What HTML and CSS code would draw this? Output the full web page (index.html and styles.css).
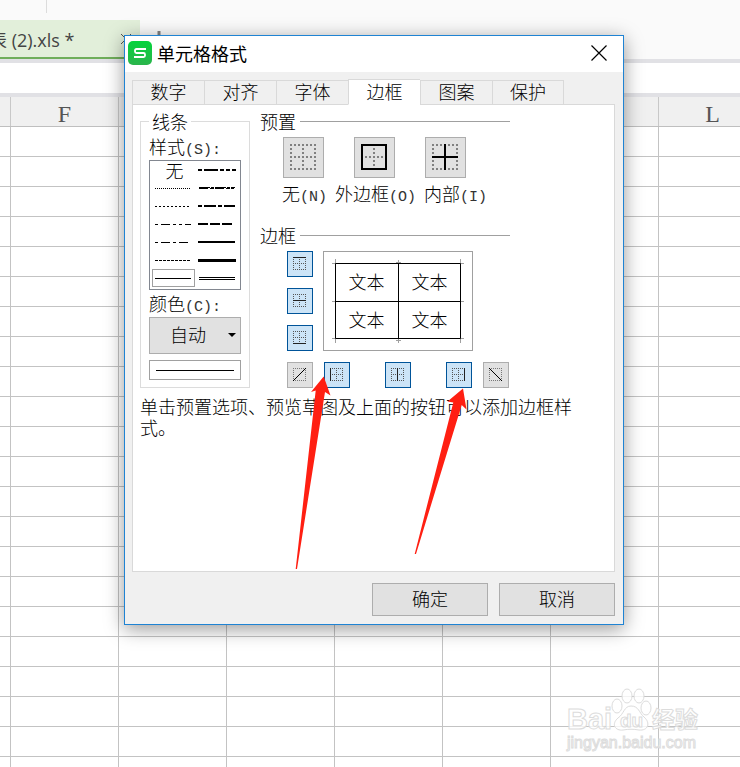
FILE: index.html
```html
<!DOCTYPE html>
<html lang="zh-CN">
<head>
    <meta charset="UTF-8">
    <meta name="viewport" content="width=device-width, initial-scale=1.0">
    <title>单元格格式</title>
    <link rel="stylesheet" href="styles.css">
</head>
<body>
    <!-- Shared icon shapes -->
    <svg class="defs" width="0" height="0">
        <symbol id="grid-lg" viewBox="0 0 27 27">
            <path d="M0 1H26M0 13H26M0 25H26M1 0V26M13 0V26M25 0V26" stroke="#808080" stroke-width="2" stroke-dasharray="2 2"/>
        </symbol>
        <symbol id="grid-sm" viewBox="0 0 14 14">
            <path d="M0 .5H13M0 6.5H13M0 12.5H13M.5 0V13M6.5 0V13M12.5 0V13" stroke="#555" stroke-dasharray="1 1"/>
        </symbol>
        <symbol id="box-sm" viewBox="0 0 14 14">
            <path d="M0 .5H13M0 12.5H13M.5 0V13M12.5 0V13" stroke="#777" stroke-dasharray="1 1"/>
        </symbol>
    </svg>

    <div class="workspace">
        <!-- Spreadsheet behind the dialog -->
        <div class="doc-tabs">
            <span class="doc-divider"></span>
            <div class="doc-tab">
                <span class="doc-name">表 (2).xls *</span>
                <svg class="doc-close" width="12" height="12"><path d="M1 1L11 11M11 1L1 11" stroke="#555"/></svg>
            </div>
            <svg class="doc-add" width="20" height="20"><path d="M10 0V20M0 10H20" stroke="#808080" stroke-width="3"/></svg>
        </div>
        <div class="formula-bar"></div>
        <div class="columns">
            <span></span><span>F</span><span>G</span><span>H</span><span>I</span><span>J</span><span>K</span><span>L</span>
        </div>
        <div class="cells"></div>

        <!-- Format cells dialog -->
        <div class="dialog" role="dialog" aria-labelledby="dialog-title">
            <div class="title-bar">
                <svg class="app-icon" width="24" height="24" viewBox="0 0 24 24" fill="none">
                    <defs>
                        <linearGradient id="green" x1="0" y1="0" x2="0" y2="1">
                            <stop offset="0" stop-color="#04d43c"/>
                            <stop offset="1" stop-color="#2bb44c"/>
                        </linearGradient>
                    </defs>
                    <rect width="24" height="24" rx="5" fill="url(#green)"/>
                    <path d="M18 8H8.500Q7 8 7 9.500V10.500Q7 12 8.500 12H15.500Q17 12 17 13.500V14.500Q17 16 15.500 16H6" stroke="#fff" stroke-width="1.800"/>
                </svg>
                <h1 id="dialog-title">单元格格式</h1>
                <button class="close" aria-label="关闭">
                    <svg width="16" height="16"><path d="M.5 .5L15.500 15.500M15.500 .5L.5 15.500" stroke="#000" stroke-width="1.200"/></svg>
                </button>
            </div>

            <div class="dialog-body">
                <div class="tabs" role="tablist">
                    <button class="tab" role="tab">数字</button>
                    <button class="tab" role="tab">对齐</button>
                    <button class="tab" role="tab">字体</button>
                    <button class="tab active" role="tab" aria-selected="true">边框</button>
                    <button class="tab" role="tab">图案</button>
                    <button class="tab" role="tab">保护</button>
                </div>

                <div class="panel">
                    <div class="panel-columns">
                        <fieldset class="lines">
                            <legend>线条</legend>
                            <span class="field-label" id="style-label">样式<span class="key">(S):</span></span>
                            <div class="style-list" role="group" aria-labelledby="style-label">
                                <button class="none">无</button>
                                <button aria-label="双点划线"><svg width="38" height="6"><path d="M0 3H38" stroke-width="2" stroke-dasharray="4 2 14 2 4 2"/></svg></button>
                                <button aria-label="细点线"><svg width="38" height="6"><path d="M0 3.500H36" stroke-dasharray="1 1"/></svg></button>
                                <button aria-label="斜点划线"><svg width="38" height="6"><path d="M1 2.500H37" stroke-dasharray="11 1 3 1"/><path d="M1 3.500H36" stroke-dasharray="9 2 4 1"/></svg></button>
                                <button aria-label="点线"><svg width="38" height="6"><path d="M0 3.500H35" stroke-dasharray="2 2"/></svg></button>
                                <button aria-label="粗点划线"><svg width="38" height="6"><path d="M0 3H37" stroke-width="2" stroke-dasharray="4 2 12 2"/></svg></button>
                                <button aria-label="细双点划线"><svg width="38" height="6"><path d="M0 3.500H36" stroke-dasharray="3 3 9 3 3 3"/></svg></button>
                                <button aria-label="粗虚线"><svg width="38" height="6"><path d="M0 3H34" stroke-width="2" stroke-dasharray="10 2"/></svg></button>
                                <button aria-label="细点划线"><svg width="38" height="6"><path d="M0 3.500H33" stroke-dasharray="3 3 9 3"/></svg></button>
                                <button aria-label="中线"><svg width="38" height="6"><path d="M0 3H37" stroke-width="2"/></svg></button>
                                <button aria-label="虚线"><svg width="38" height="6"><path d="M0 3.500H35" stroke-dasharray="3 1"/></svg></button>
                                <button aria-label="粗线"><svg width="38" height="6"><path d="M0 3.500H38" stroke-width="3"/></svg></button>
                                <button class="selected" aria-label="细线"><svg width="38" height="6"><path d="M0 3.500H36"/></svg></button>
                                <button aria-label="双线"><svg width="38" height="6"><path d="M1 2.500H37M1 4.500H37"/></svg></button>
                            </div>
                            <label class="field-label" for="color">颜色<span class="key">(C):</span></label>
                            <div class="select-wrap">
                                <select id="color"><option>自动</option></select>
                            </div>
                            <div class="line-preview"></div>
                        </fieldset>

                        <div class="settings">
                            <h2>预置</h2>
                            <div class="presets">
                                <button id="preset-none"><svg width="27" height="27"><use href="#grid-lg"/></svg></button>
                                <button id="preset-outer"><svg width="27" height="27"><path d="M13 4V22M4 13H22" stroke="#808080" stroke-width="2" stroke-dasharray="2 2"/><rect x="1" y="1" width="24" height="24" fill="none" stroke="#000" stroke-width="2"/></svg></button>
                                <button id="preset-inner"><svg width="27" height="27"><path d="M0 1H26M0 25H26M1 0V26M25 0V26" stroke="#808080" stroke-width="2" stroke-dasharray="2 2"/><path d="M0 13H26M13 0V26" stroke="#000" stroke-width="2"/></svg></button>
                            </div>
                            <div class="preset-labels">
                                <label for="preset-none">无<span class="key">(N)</span></label>
                                <label for="preset-outer">外边框<span class="key">(O)</span></label>
                                <label for="preset-inner">内部<span class="key">(I)</span></label>
                            </div>

                            <h2 class="border-heading">边框</h2>
                            <div class="border-tools">
                                <div class="side">
                                    <button class="edge on" aria-label="上边框"><svg width="14" height="14"><use href="#grid-sm"/><path d="M0 .5H13" stroke="#222"/></svg></button>
                                    <button class="edge on" aria-label="水平内框线"><svg width="14" height="14"><use href="#grid-sm"/><path d="M0 6.500H13" stroke="#222"/></svg></button>
                                    <button class="edge on" aria-label="下边框"><svg width="14" height="14"><use href="#grid-sm"/><path d="M0 12.500H13" stroke="#222"/></svg></button>
                                </div>
                                <div class="preview">
                                    <svg class="preview-lines" width="132" height="84" fill="none">
                                        <path d="M0 4.500H5M3.500 0V5M127 4.500H132M128.500 0V5M0 79.500H5M3.500 79V84M127 79.500H132M128.500 79V84M0 42.500H4M128 42.500H132M64 3.500H69M64 81.500H69M66.500 1V4M66.500 80V84" stroke="#a0a0a0"/>
                                        <path d="M3.500 4.500H128.500V79.500H3.500ZM66.500 4V80M4 42.500H129" stroke="#000"/>
                                    </svg>
                                    <span>文本</span><span>文本</span><span>文本</span><span>文本</span>
                                </div>
                                <div class="bottom">
                                    <button class="edge" aria-label="左斜线"><svg width="14" height="14"><use href="#box-sm"/><path d="M0 13L13 0" stroke="#000"/></svg></button>
                                    <div class="verticals">
                                        <button class="edge on" aria-label="左边框"><svg width="14" height="14"><use href="#grid-sm"/><path d="M.5 0V13" stroke="#222"/></svg></button>
                                        <button class="edge on" aria-label="垂直内框线"><svg width="14" height="14"><use href="#grid-sm"/><path d="M6.500 0V13" stroke="#222"/></svg></button>
                                        <button class="edge on" aria-label="右边框"><svg width="14" height="14"><use href="#grid-sm"/><path d="M12.500 0V13" stroke="#222"/></svg></button>
                                    </div>
                                    <button class="edge" aria-label="右斜线"><svg width="14" height="14"><use href="#box-sm"/><path d="M0 0L13 13" stroke="#000"/></svg></button>
                                </div>
                            </div>
                        </div>
                    </div>
                    <p class="hint">单击预置选项、预览草图及上面的按钮可以添加边框样式。</p>
                </div>

                <div class="actions">
                    <button>确定</button>
                    <button>取消</button>
                </div>
            </div>
        </div>

        <!-- Red pointers over the left and right border buttons -->
        <svg class="arrows" width="740" height="767" fill="#ff1f12">
            <path d="M323.700 376.500L330.500 395.500L325 392L297 569H295.700L315.700 390.500L311 392Z"/>
            <path d="M463 388.500L466.500 409.500L461.700 405L416 554H414.700L453.300 402.500L447.500 401.500Z"/>
        </svg>

        <svg class="watermark" width="140" height="72">
            <g fill="#fff" fill-opacity=".8" stroke="#dcdcdc">
                <text x="5" y="48" font-size="29" font-weight="bold">Bai</text>
                <ellipse cx="55" cy="25" rx="5" ry="7"/>
                <ellipse cx="65" cy="15" rx="5" ry="7"/>
                <ellipse cx="77" cy="15" rx="5" ry="7"/>
                <ellipse cx="84" cy="27" rx="5" ry="7"/>
                <path d="M69 25C62 25 62 33 56 37C49 43 53 50 61 49C67 48 71 48 77 49C86 50 89 42 82 36C77 32 77 25 69 25Z"/>
                <text x="58" y="46" font-size="19" font-weight="bold">du</text>
                <text class="cjk" x="90" y="47" font-size="23" font-weight="bold">经验</text>
                <text x="5" y="67" font-size="16">jingyan.baidu.com</text>
            </g>
        </svg>
    </div>
</body>
</html>
```
FILE: styles.css
```css
* {
    box-sizing: border-box;
    margin: 0;
    padding: 0;
}

body {
    font-family: "Noto Sans CJK SC", sans-serif;
    font-size: 18px;
    font-weight: 300;
    color: #000;
}

button,
select {
    font: inherit;
    color: inherit;
    border: 1px solid #adadad;
    border-radius: 0;
    background: #e1e1e1;
}

svg {
    display: block;
}

.defs {
    position: absolute;
}

.workspace {
    position: relative;
    display: flex;
    flex-direction: column;
    min-height: 100vh;
    overflow: hidden;
    background: #fff;
}

/* Spreadsheet */
.doc-tabs {
    position: relative;
    display: flex;
    align-items: flex-end;
    height: 59px;
    background: #fafafa;
}

.doc-divider {
    position: absolute;
    left: 46px;
    top: 0;
    width: 1px;
    height: 13px;
    background: #dcdcdc;
}

.doc-tab {
    display: flex;
    align-items: center;
    justify-content: space-between;
    width: 140px;
    height: 39px;
    padding-right: 8px;
    background: #e2efda;
    border-bottom: 2px solid #6fae5a;
}

.doc-name {
    margin-left: -11px;
    font-family: "Open Sans", "Noto Sans CJK SC", sans-serif;
    font-weight: 400;
    color: #444;
    white-space: nowrap;
}

.doc-add {
    margin: 0 0 8px 9px;
}

.formula-bar {
    height: 38px;
    background: #fff;
    border-top: 4px solid #e1e1e5;
    border-bottom: 4px solid #e1e1e5;
}

.columns {
    display: flex;
    height: 30px;
    background: #f0f0f0;
    border-bottom: 1px solid #bfbfbf;
}

.columns span {
    flex: 0 0 108px;
    border-right: 1px solid #c8c8c8;
    font: 24px/34px "Liberation Serif", serif;
    text-align: center;
    color: #555;
}

.columns span:first-child {
    flex-basis: 11px;
}

.cells {
    flex: 1;
    background-image:
        linear-gradient(to right, #c3c3c3 1px, transparent 1px),
        linear-gradient(to top, #c3c3c3 1px, transparent 1px);
    background-size: 108px 30px;
    background-position: 10px 0;
}

/* Dialog */
.dialog {
    position: absolute;
    left: 124px;
    top: 35px;
    width: 500px;
    background: #f0f0f0;
    border: 1px solid #1f83d3;
    box-shadow: 0 4px 18px rgba(0, 0, 0, 0.4);
}

.title-bar {
    display: flex;
    align-items: center;
    height: 36px;
    padding: 0 16px 2px 3px;
    background: #fff;
}

.title-bar h1 {
    flex: 1;
    margin-left: 5px;
    font-size: 18px;
    font-weight: 400;
}

.close {
    border: none;
    background: none;
}

.dialog-body {
    padding: 7px 8px 8px 7px;
}

.tabs {
    display: flex;
    align-items: flex-end;
    height: 26px;
}

.tab {
    width: 72px;
    height: 25px;
    line-height: 21px;
    padding-bottom: 2px;
    background: #f0f0f0;
    border-color: #d9d9d9;
    border-right-width: 0;
}

.tab:last-child {
    border-right-width: 1px;
}

.tab.active {
    height: 26px;
    background: #fff;
    border-bottom-color: #fff;
    z-index: 1;
}

.panel {
    min-height: 468px;
    margin-top: -1px;
    padding: 4px 7px;
    background: #fff;
    border: 1px solid #d9d9d9;
}

.panel-columns {
    display: flex;
    align-items: flex-start;
    gap: 10px;
}

.key {
    font-family: "Liberation Mono", monospace;
    font-size: 15px;
    line-height: 1;
    color: #333;
}

/* Line style */
.lines {
    width: 110px;
    padding: 0 8px 7px;
    border: 1px solid #dcdcdc;
}

.lines legend {
    padding: 0 3px;
    line-height: 24px;
}

.field-label {
    display: block;
    height: 27px;
    line-height: 27px;
}

.style-list {
    display: grid;
    grid-template-columns: 1fr 1fr;
    grid-auto-rows: 18px;
    height: 130px;
    padding: 0 2px;
    border: 1px solid #828790;
}

.style-list button {
    display: flex;
    align-items: center;
    padding-left: 2px;
    border-color: transparent;
    background: none;
}

.style-list .none {
    justify-content: center;
    line-height: 16px;
}

.style-list .selected {
    border-color: #a0a0a0;
}

.style-list path {
    stroke: #000;
}

.select-wrap {
    position: relative;
}

.select-wrap::after {
    content: "";
    position: absolute;
    right: 5px;
    top: 16px;
    border: 4px solid transparent;
    border-top-color: #000;
    border-bottom-width: 0;
}

select {
    display: block;
    width: 100%;
    height: 37px;
    padding: 0 0 3px 20px;
    appearance: none;
}

.line-preview {
    display: flex;
    align-items: center;
    height: 20px;
    margin-top: 6px;
    padding: 0 6px;
    border: 1px solid #a0a0a0;
}

.line-preview::before {
    content: "";
    flex: 1;
    height: 1px;
    background: #000;
}

/* Presets and borders */
.settings {
    width: 250px;
}

.settings h2 {
    display: flex;
    align-items: center;
    gap: 4px;
    font-size: 18px;
    font-weight: 300;
    line-height: 24px;
}

.settings h2::after {
    content: "";
    flex: 1;
    height: 1px;
    background: #a0a0a0;
}

.presets {
    display: flex;
    gap: 30px;
    margin: 4px 0 3px 23px;
}

.presets button,
.edge {
    display: flex;
    align-items: center;
    justify-content: center;
}

.presets button {
    width: 41px;
    height: 41px;
}

.preset-labels {
    display: flex;
    gap: 8px;
    height: 24px;
    margin-left: 22px;
    line-height: 24px;
    white-space: nowrap;
}

.settings .border-heading {
    margin-top: 18px;
}

.border-tools {
    display: grid;
    grid-template-columns: 26px 150px;
    gap: 11px 10px;
    margin: 4px 0 0 27px;
}

.side {
    display: flex;
    flex-direction: column;
    justify-content: space-between;
}

.edge {
    flex: none;
    width: 26px;
    height: 26px;
}

.edge.on {
    background: #cce4f7;
    border-color: #005499;
}

.preview {
    position: relative;
    display: grid;
    grid-template-columns: 1fr 1fr;
    grid-template-rows: 1fr 1fr;
    place-items: center;
    height: 100px;
    padding: 10px 11px 12px;
    border: 1px solid #a0a0a0;
}

.preview-lines {
    position: absolute;
    left: 8px;
    top: 7px;
}

.bottom {
    grid-column: 1 / -1;
    display: flex;
    gap: 11px;
}

.verticals {
    display: flex;
    flex: none;
    justify-content: space-between;
    width: 148px;
}

.hint {
    max-width: 444px;
    margin-top: 8px;
    line-height: 21px;
}

.actions {
    display: flex;
    justify-content: flex-end;
    gap: 11px;
    padding-top: 11px;
}

.actions button {
    width: 116px;
    height: 33px;
    padding-bottom: 3px;
}

/* Overlays */
.arrows {
    position: absolute;
    left: 0;
    top: 0;
    pointer-events: none;
}

.watermark {
    position: absolute;
    right: 38px;
    bottom: 14px;
    font-family: "Liberation Sans", sans-serif;
    font-weight: 400;
}

.watermark .cjk {
    font-family: "Noto Sans CJK SC", sans-serif;
}
```
